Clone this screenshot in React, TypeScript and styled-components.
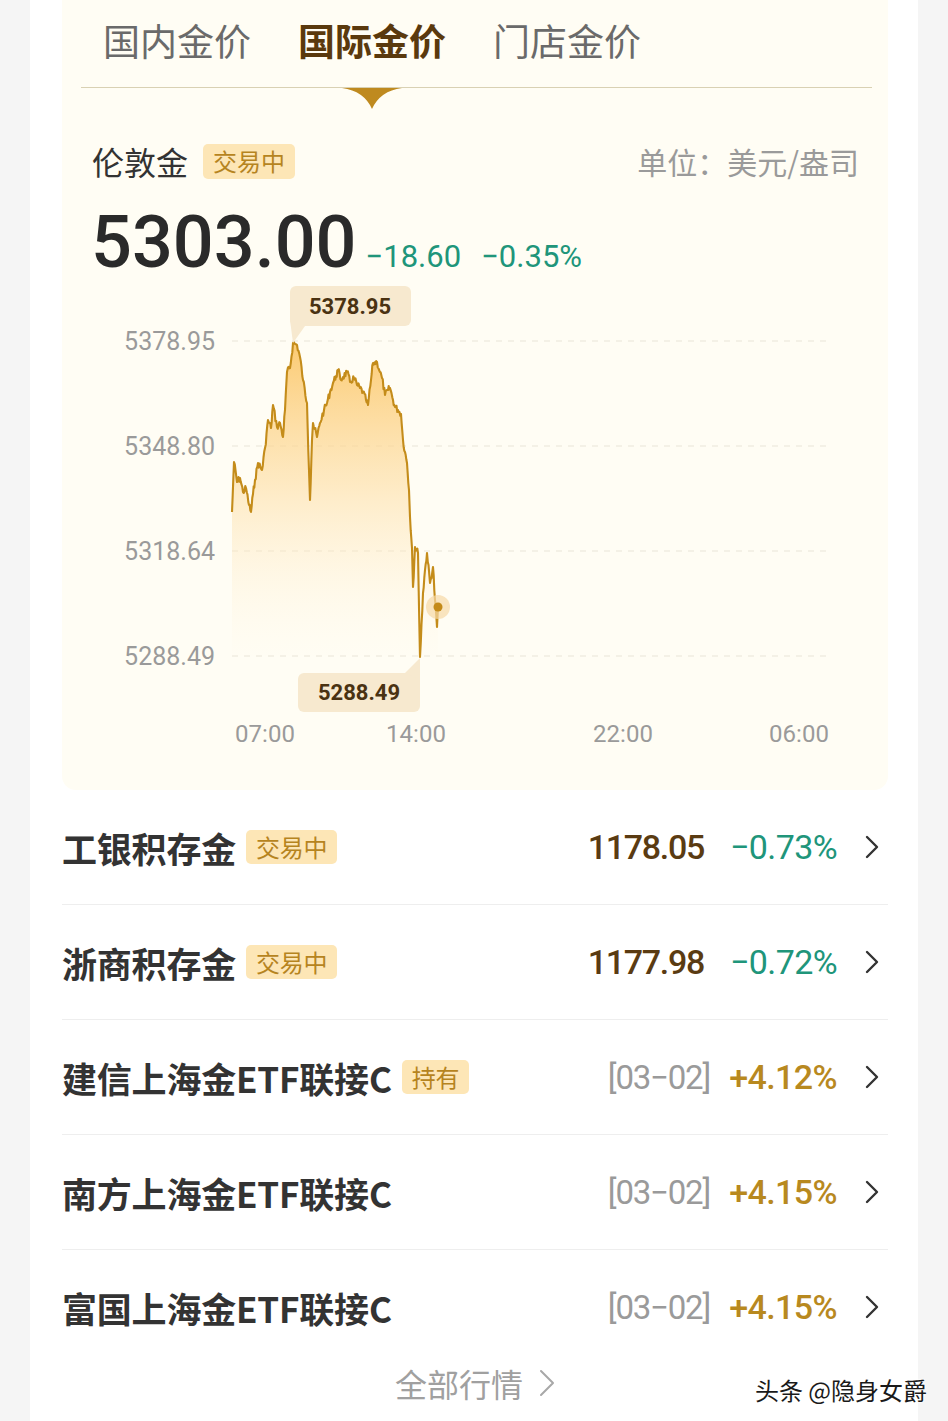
import React from "react";
import styled, { createGlobalStyle } from "styled-components";

const CJK = `"Noto Sans CJK SC", "Noto Sans", sans-serif`;
const NUM = `Roboto, "Noto Sans CJK SC", sans-serif`;

const GlobalStyle = createGlobalStyle`
  html, body { margin: 0; padding: 0; background: #f5f5f5; }
  body { font-family: ${CJK}; }
`;

const Page = styled.div`
  position: relative;
  width: 948px;
  min-height: 1421px;
  padding: 0 30px;
  box-sizing: border-box;
  background: #f5f5f5;
`;

const Card = styled.div`
  background: #ffffff;
  min-height: 1421px;
  padding: 0 30px 0 32px;
  box-sizing: border-box;
`;

const Panel = styled.div`
  background: #fffdf4;
  border-radius: 0 0 14px 14px;
  padding-bottom: 30px;
  display: flex;
  flex-direction: column;
`;

const TabBar = styled.div`
  margin: 0 16px 0 19px;
  height: 87px;
  border-bottom: 1px solid #d9d1b3;
  display: flex;
  gap: 47px;
  padding-left: 22px;
`;

const Tab = styled.div<{ $active?: boolean }>`
  position: relative;
  padding-top: 18px;
  font-size: 37px;
  line-height: 44px;
  font-weight: ${(p) => (p.$active ? 700 : 400)};
  color: ${(p) => (p.$active ? "#5a390d" : "#6a6a6a")};
`;

const Indicator = styled.svg`
  position: absolute;
  top: 88px;
  left: 50%;
  transform: translateX(-50%);
`;

const InfoHeader = styled.div`
  margin-top: 55px;
  padding: 0 29px 0 30px;
  display: flex;
  align-items: center;
  justify-content: space-between;
  height: 36px;
`;

const Title = styled.div`
  display: flex;
  align-items: center;
  gap: 15px;
  font-size: 32px;
  color: #333;
`;

const Badge = styled.span<{ $size?: number }>`
  display: inline-flex;
  align-items: center;
  justify-content: center;
  height: ${(p) => p.$size ?? 35}px;
  padding: 0 10px;
  border-radius: 5px;
  background: #fde6b6;
  color: #b6841f;
  font-size: 24px;
  font-weight: 400;
  line-height: 1;
`;

const Unit = styled.div`
  font-size: 30px;
  color: #9a9a9a;
`;

const PriceRow = styled.div`
  margin-top: 28px;
  padding-left: 29px;
  display: flex;
  align-items: baseline;
  height: 72px;
  font-family: ${NUM};
`;

const BigPrice = styled.span`
  font-size: 72px;
  line-height: 72px;
  font-weight: 500;
  color: #2a2a2a;
  margin-right: 9px;
`;

const Delta = styled.span<{ $gap?: number }>`
  font-size: 31px;
  color: #20957a;
  margin-right: ${(p) => p.$gap ?? 0}px;
`;

const Chart = styled.svg`
  display: block;
  margin-top: 1px;
`;

const List = styled.div`
  display: flex;
  flex-direction: column;
`;

const Row = styled.div<{ $last?: boolean }>`
  height: 114px;
  display: flex;
  align-items: center;
  justify-content: space-between;
  border-bottom: 1px solid ${(p) => (p.$last ? "transparent" : "#eeeeee")};
`;

const RowName = styled.div`
  display: flex;
  align-items: center;
  gap: 10px;
  font-size: 35px;
  font-weight: 700;
  color: #333;
  letter-spacing: -0.2px;
`;

const RowRight = styled.div`
  display: flex;
  align-items: center;
  font-family: ${NUM};
  padding-right: 9px;
`;

const Value = styled.span<{ $kind: "price" | "date" }>`
  font-size: ${(p) => (p.$kind === "price" ? 34 : 33)}px;
  letter-spacing: ${(p) => (p.$kind === "price" ? "-1.3px" : "-1.2px")};
  color: ${(p) => (p.$kind === "price" ? "#5a3b12" : "#9a9a9a")};
  font-weight: ${(p) => (p.$kind === "price" ? 500 : 400)};
  margin-right: ${(p) => (p.$kind === "price" ? 21 : 15)}px;
`;

const Change = styled.span<{ $up?: boolean }>`
  font-size: 34px;
  letter-spacing: -0.6px;
  width: 112px;
  text-align: right;
  color: ${(p) => (p.$up ? "#b8891f" : "#20957a")};
  font-weight: ${(p) => (p.$up ? 500 : 400)};
  margin-right: 28px;
`;

const Footer = styled.div`
  display: flex;
  justify-content: center;
  align-items: center;
  gap: 16px;
  height: 36px;
  font-size: 32px;
  color: #a0a0a0;
`;

const Watermark = styled.div`
  position: absolute;
  right: 21px;
  top: 1372px;
  font-size: 24px;
  color: #1a1a1a;
  text-shadow: 0 0 2px #fff, 0 0 2px #fff, 0 0 3px #fff;
`;

const KEY: [number, number][] = [
  [232, 512], [234, 462], [237, 482], [240, 478], [243, 492], [246, 488], [249, 505], [251, 512],
  [253, 494], [255, 480], [258, 463], [262, 470], [265, 448], [268, 420], [271, 428], [273, 405],
  [277, 427], [280, 423], [283, 437], [285, 410], [287, 372], [290, 368], [293, 343], [297, 345],
  [300, 357], [303, 380], [307, 403], [309, 470], [310, 500], [312, 440], [313, 423], [317, 437],
  [320, 423], [324, 410], [327, 403], [330, 392], [333, 383], [336, 376], [338, 370], [341, 380],
  [343, 377], [347, 372], [350, 382], [354, 378], [357, 385], [360, 388], [363, 392], [366, 400],
  [368, 405], [371, 380], [373, 363], [377, 362], [380, 372], [382, 378], [385, 395], [388, 390],
  [390, 388], [393, 400], [395, 407], [398, 410], [401, 414], [403, 440], [405, 452], [407, 463],
  [409, 490], [410, 517], [412, 548], [413, 587], [415, 547], [418, 553], [420, 657], [423, 593],
  [425, 570], [427, 553], [430, 583], [433, 567], [435, 600], [437, 627], [438, 607],
];

function buildPoints(): [number, number][] {
  let seed = 7;
  const rnd = () => {
    seed = (seed * 9301 + 49297) % 233280;
    return seed / 233280;
  };
  const out: [number, number][] = [];
  for (let i = 0; i < KEY.length - 1; i++) {
    const [x0, y0] = KEY[i];
    const [x1, y1] = KEY[i + 1];
    const steps = Math.max(1, Math.round((x1 - x0) / 0.8));
    for (let s = 0; s < steps; s++) {
      const t = s / steps;
      const noise = s === 0 ? 0 : (rnd() - 0.5) * 7;
      out.push([x0 + (x1 - x0) * t, y0 + (y1 - y0) * t + noise]);
    }
  }
  out.push(KEY[KEY.length - 1]);
  return out;
}

const PTS = buildPoints();
const LINE = PTS.map(([x, y], i) => `${i ? "L" : "M"}${x.toFixed(1)} ${y.toFixed(1)}`).join(" ");
const AREA = `${LINE} L438 656 L232 656 Z`;

const Y_LABELS = [
  { v: "5378.95", y: 341 },
  { v: "5348.80", y: 446 },
  { v: "5318.64", y: 551 },
  { v: "5288.49", y: 656 },
];
const X_LABELS = [
  { v: "07:00", x: 265 },
  { v: "14:00", x: 416 },
  { v: "22:00", x: 623 },
  { v: "06:00", x: 799 },
];

const PriceChart = () => (
  <Chart width={824} height={480} viewBox="62 280 824 480">
    <defs>
      <linearGradient id="goldFill" x1="0" y1="340" x2="0" y2="656" gradientUnits="userSpaceOnUse">
        <stop offset="0" stopColor="#fbc462" stopOpacity="0.9" />
        <stop offset="0.45" stopColor="#fddca0" stopOpacity="0.6" />
        <stop offset="1" stopColor="#fff6e2" stopOpacity="0.05" />
      </linearGradient>
    </defs>
    {Y_LABELS.map((l) => (
      <g key={l.v}>
        <line x1={232} x2={830} y1={l.y} y2={l.y} stroke="#e9e5d8" strokeWidth={1} strokeDasharray="6 6" />
        <text x={215} y={l.y + 9} textAnchor="end" fontFamily="Roboto, sans-serif" fontSize={25} fill="#9a9a9a">
          {l.v}
        </text>
      </g>
    ))}
    {X_LABELS.map((l) => (
      <text key={l.v} x={l.x} y={742} textAnchor="middle" fontFamily="Roboto, sans-serif" fontSize={24} fill="#9a9a9a">
        {l.v}
      </text>
    ))}
    <path d={AREA} fill="url(#goldFill)" />
    <path d={LINE} fill="none" stroke="#c48c1a" strokeWidth={2.1} strokeLinejoin="round" />
    <circle cx={438} cy={607} r={12} fill="#f7d9a6" opacity={0.7} />
    <circle cx={438} cy={607} r={4.5} fill="#c48a18" />

    <rect x={290} y={286} width={121} height={40} rx={6} fill="#f7e9cf" />
    <path d="M290 320 L305 326 L293 343 Z" fill="#f7e9cf" />
    <text x={350} y={314} textAnchor="middle" fontFamily="Roboto, sans-serif" fontWeight={700} fontSize={22} fill="#4a3212">
      5378.95
    </text>

    <rect x={298} y={673} width={122} height={39} rx={6} fill="#f7e9cf" />
    <path d="M420 658 L420 680 L405 673 Z" fill="#f7e9cf" />
    <text x={359} y={700} textAnchor="middle" fontFamily="Roboto, sans-serif" fontWeight={700} fontSize={22} fill="#4a3212">
      5288.49
    </text>
  </Chart>
);

const Chevron = ({ color = "#333", w = 14, h = 24, sw = 2.4 }: { color?: string; w?: number; h?: number; sw?: number }) => (
  <svg width={w} height={h} viewBox={`0 0 ${w} ${h}`}>
    <polyline points={`2,2 ${w - 2},${h / 2} 2,${h - 2}`} fill="none" stroke={color} strokeWidth={sw} strokeLinecap="round" strokeLinejoin="round" />
  </svg>
);

type Item = { name: string; badge?: string; value: string; kind: "price" | "date"; change: string; up?: boolean };

const ITEMS: Item[] = [
  { name: "工银积存金", badge: "交易中", value: "1178.05", kind: "price", change: "−0.73%" },
  { name: "浙商积存金", badge: "交易中", value: "1177.98", kind: "price", change: "−0.72%" },
  { name: "建信上海金ETF联接C", badge: "持有", value: "[03−02]", kind: "date", change: "+4.12%", up: true },
  { name: "南方上海金ETF联接C", value: "[03−02]", kind: "date", change: "+4.15%", up: true },
  { name: "富国上海金ETF联接C", value: "[03−02]", kind: "date", change: "+4.15%", up: true },
];

export default function App() {
  return (
    <>
      <GlobalStyle />
      <Page>
        <Card>
          <Panel>
            <TabBar>
              <Tab>国内金价</Tab>
              <Tab $active>
                国际金价
                <Indicator width={60} height={21} viewBox="0 0 60 21">
                  <path d="M0 0 H60 Q38 3 30 21 Q22 3 0 0 Z" fill="#bf8a1f" />
                </Indicator>
              </Tab>
              <Tab>门店金价</Tab>
            </TabBar>
            <InfoHeader>
              <Title>
                伦敦金
                <Badge>交易中</Badge>
              </Title>
              <Unit>单位：美元/盎司</Unit>
            </InfoHeader>
            <PriceRow>
              <BigPrice>5303.00</BigPrice>
              <Delta $gap={20}>−18.60</Delta>
              <Delta>−0.35%</Delta>
            </PriceRow>
            <PriceChart />
          </Panel>
          <List>
            {ITEMS.map((it, i) => (
              <Row key={it.name} $last={i === ITEMS.length - 1}>
                <RowName>
                  {it.name}
                  {it.badge && <Badge $size={34}>{it.badge}</Badge>}
                </RowName>
                <RowRight>
                  <Value $kind={it.kind}>{it.value}</Value>
                  <Change $up={it.up}>{it.change}</Change>
                  <Chevron />
                </RowRight>
              </Row>
            ))}
          </List>
          <Footer>
            全部行情
            <Chevron color="#a8a8a8" w={16} h={28} sw={2} />
          </Footer>
        </Card>
        <Watermark>头条 @隐身女爵</Watermark>
      </Page>
    </>
  );
}
